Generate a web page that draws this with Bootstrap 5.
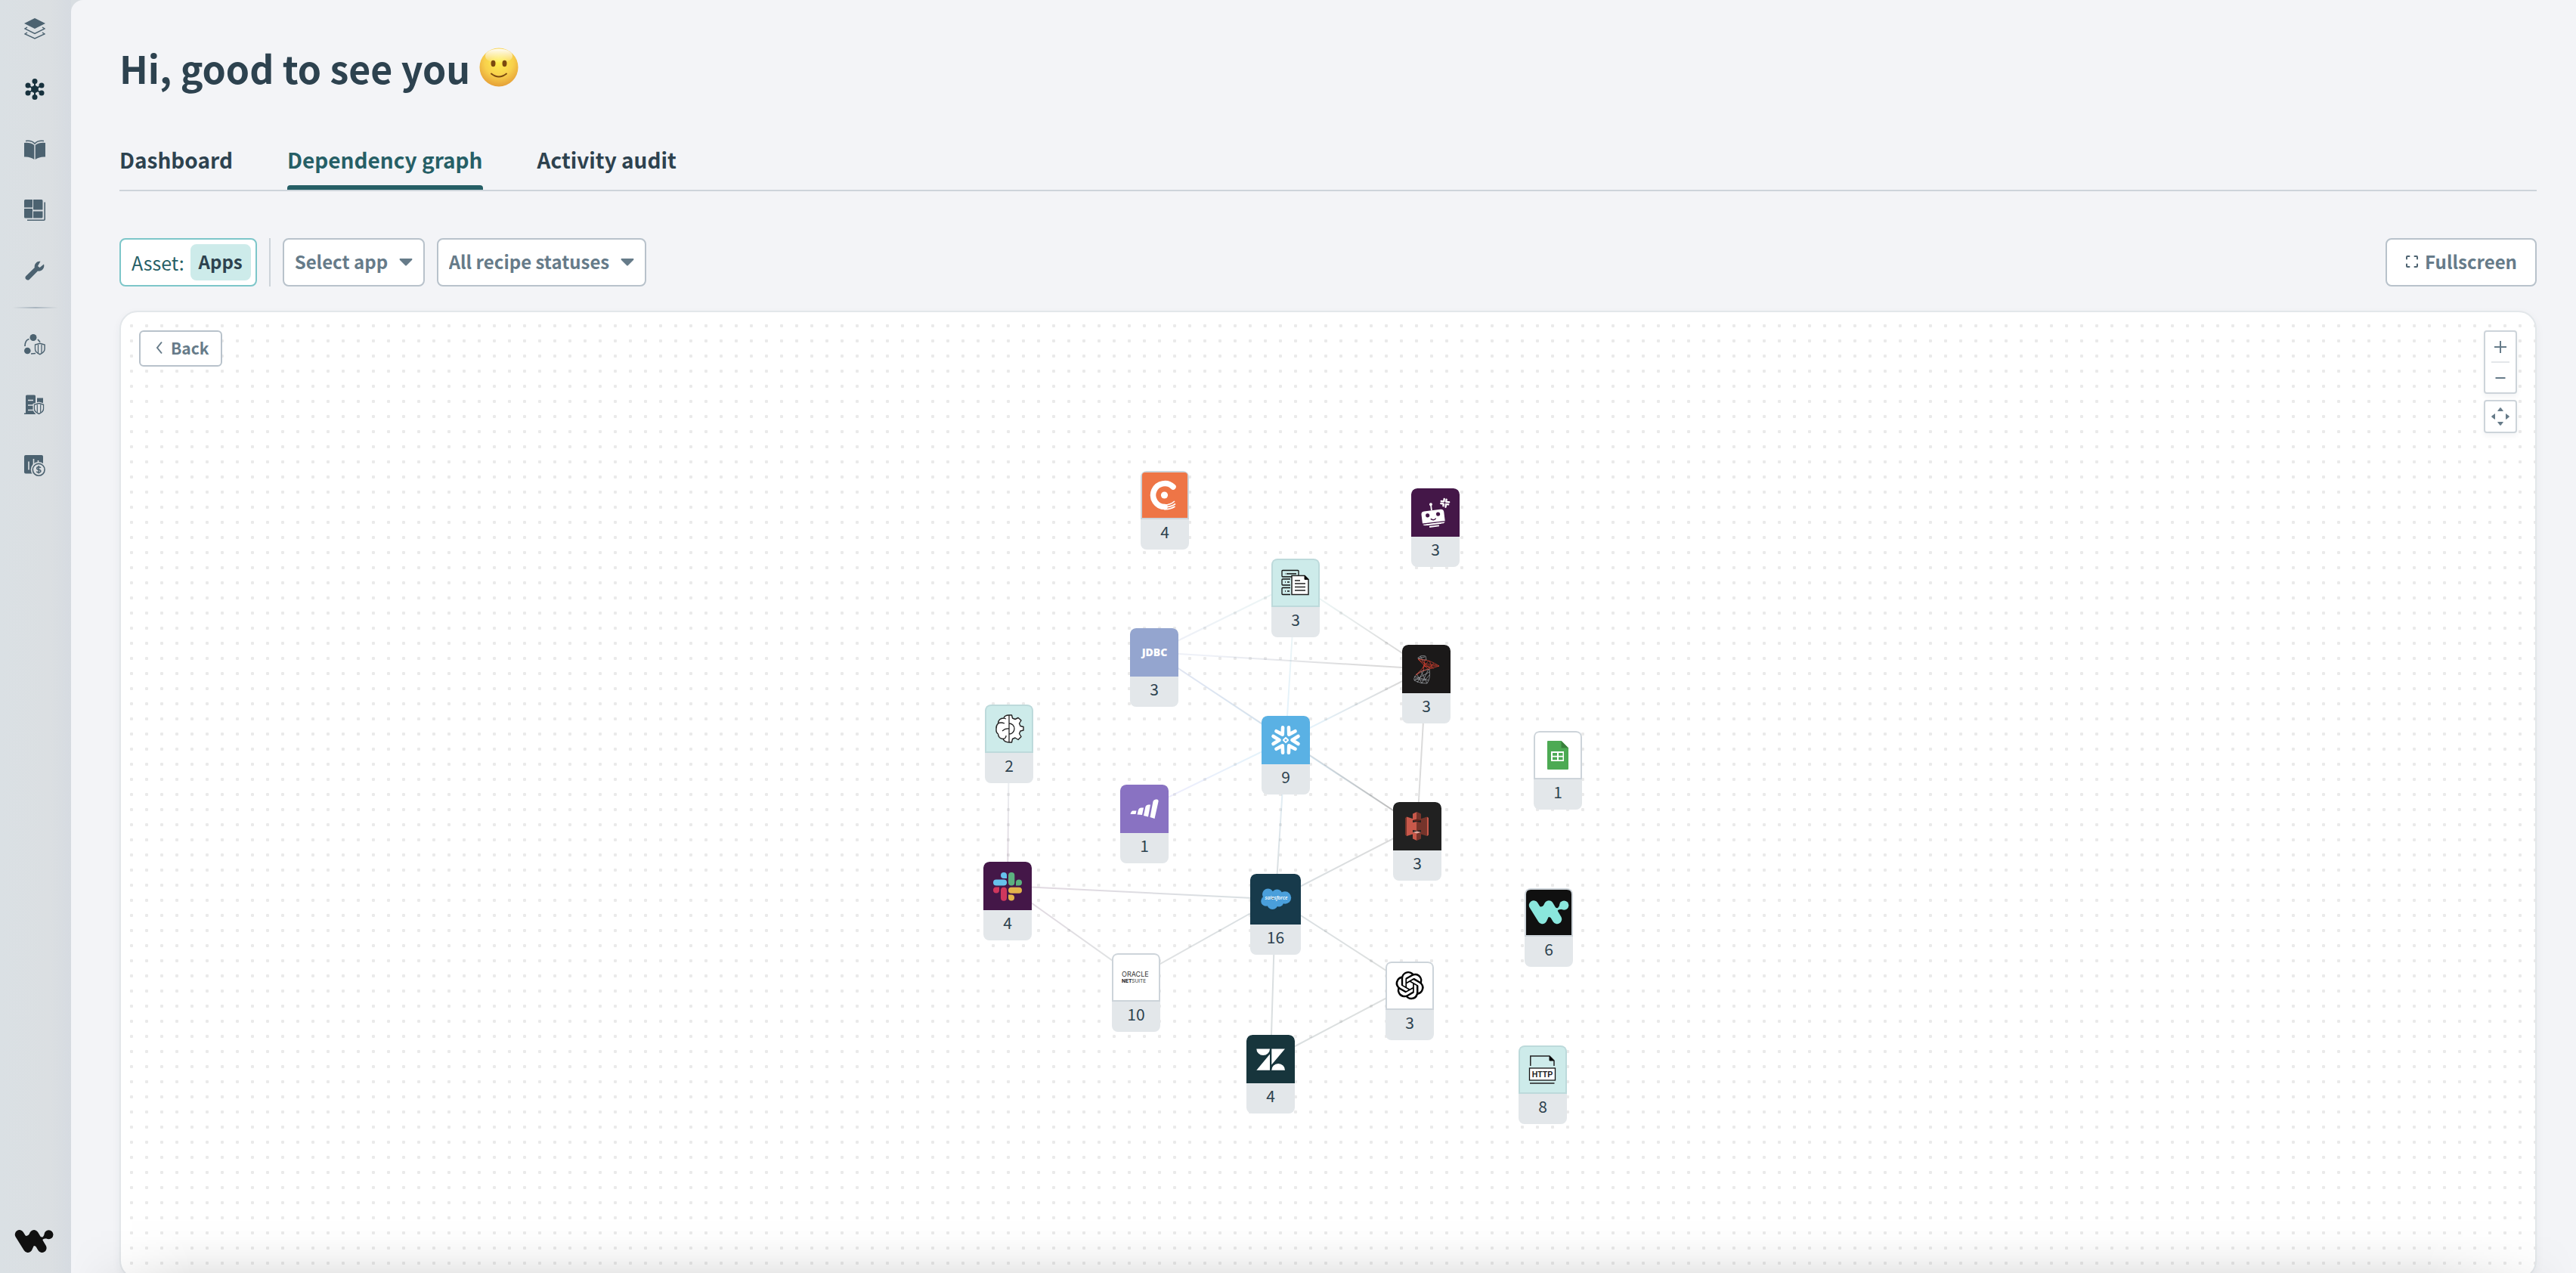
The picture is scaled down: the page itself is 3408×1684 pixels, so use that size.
<!DOCTYPE html>
<html lang="en">
<head>
<meta charset="utf-8">
<meta name="viewport" content="width=device-width, initial-scale=1">
<title>Dependency graph</title>
<link href="https://cdn.jsdelivr.net/npm/bootstrap@5.3.0/dist/css/bootstrap.min.css" rel="stylesheet">
<style>
  :root { --ink:#2d424f; --muted-ink:#667b89; --line:#b8c2cb; --teal:#265f66; --icon:#4c6270; }
  body { font-family:"Noto Sans CJK SC","Source Sans Pro",sans-serif; color:var(--ink); background:#d9dee2; }
  .side { width:94px; padding:14px 0 18px; background:linear-gradient(90deg,#dae0e4,#dbdfe2 70%,#d6dbe1); }
  .side a { height:48px; width:94px; padding-right:2px; color:var(--icon); }
  .side a.active { color:#17313d; }
  .side svg { width:28px; height:28px; }
  .side a.brand { padding-right:4px; color:#101010; }
  .side a.brand svg { width:52px; height:32px; }
  .side .top-links, .side .admin-links { gap:32px; }
  .side-rule { width:60px; height:2px; margin:24px 0; background:linear-gradient(90deg,transparent,#a9b5bf,transparent); }
  .page { background:#f3f4f7; border-top-left-radius:16px; padding:58px 52px 0 64px; min-width:0; }
  .greet { font-size:50px; line-height:62px; font-weight:700; gap:12px; margin:0; }
  .greet svg { width:52px; height:52px; }
  .tabs { gap:72px; margin-top:62px; border-bottom:2px solid #cdd4da; }
  .tabs .nav-link { height:69px; padding:8px 0 0; font-size:28px; line-height:42px; font-weight:700; color:var(--ink); border-radius:0; position:relative; }
  .tabs .nav-link.active { color:var(--teal); }
  .tabs .nav-link.active::after { content:""; position:absolute; left:0; right:0; bottom:0; height:6px; background:var(--teal); border-radius:4px 4px 0 0; }
  .tools { margin-top:62px; gap:16px; }
  .tool { height:64px; border:2px solid var(--line); border-radius:8px; background-color:#fff; color:var(--muted-ink); font-size:24px; line-height:36px; font-weight:700; padding-bottom:2px; }
  .tool:hover { border-color:var(--line); color:var(--ink); background-color:#fff; }
  .asset { border-color:#7dc6c9; color:var(--teal); font-weight:400; padding:0 6px 0 14px; gap:8px; font-size:25px; }
  .asset:hover { border-color:#7dc6c9; }
  .asset span { background:#cdebea; color:var(--ink); font-size:24px; font-weight:700; border-radius:8px; height:48px; padding:5px 11px; }
  .split { width:2px; background:#cdd4da; }
  select.tool { width:auto; padding:0 46px 2px 14px; background-position:right 14px center; background-size:18px 10px;
    background-image:url("data:image/svg+xml,%3Csvg xmlns='http://www.w3.org/2000/svg' viewBox='0 0 18 10'%3E%3Cpath d='M1 0h16q1 1 0 2l-7 7q-1 1-2 0L1 2Q0 1 1 0z' fill='%23667b89'/%3E%3C/svg%3E"); }
  .full { padding:0 24px 2px; gap:8px; }
  .board { margin-top:32px; height:calc(100vh - 403px); min-height:1200px; border:2px solid #e3e7ea; border-radius:24px; padding:24px;
    box-shadow:0 4px 12px rgba(45,66,79,.05); background:#fff radial-gradient(circle at center,#eaeaea 0 2px,transparent 2.4px) 4px 8px/20px 20px; position:relative; }
  .back { height:48px; border:2px solid var(--line); border-radius:6px; background:#fff; color:var(--muted-ink); font-size:21px; line-height:32px; font-weight:700; padding:0 16px 2px 20px; gap:10px; }
  .zoomers { gap:8px; }
  .zoomers > div { width:44px; border:2px solid #cdd4da; border-radius:4px; background:#fff; box-shadow:0 4px 6px rgba(45,66,79,.05); }
  .zoomers button { height:39px; border:0; padding:0; color:var(--muted-ink); border-radius:0; }
  .zoomers .fit { height:40px; }
  .zoomers hr { width:24px; height:2px; margin:0 8px; border:0; background:#e3e7ea; opacity:1; }
  .graph { position:absolute; top:0; left:50%; width:1200px; height:1200px; margin-left:-600px; }
  .edges { position:absolute; inset:0; width:100%; height:100%; }
  .app { position:absolute; width:64px; height:104px; border-radius:8px; background:#e3e7ea; overflow:hidden; color:var(--ink); font-size:21px; line-height:32px; text-align:center; text-decoration:none; display:block; }
  .app > svg { display:block; width:64px; height:64px; border-radius:8px 8px 0 0; }
  .app .edged { box-shadow:inset 0 0 0 2px #cdd4da; }
  .app.hub { width:67px; height:107px; }
  .app.hub > svg { width:67px; height:67px; }
  .fog { position:fixed; left:94px; right:0; bottom:0; height:76px; pointer-events:none; background:linear-gradient(transparent,rgba(0,0,0,.008) 35%,rgba(0,0,0,.04) 70%,rgba(0,0,0,.085)); -webkit-mask-image:linear-gradient(90deg,transparent,#000 160px calc(100% - 200px),transparent); mask-image:linear-gradient(90deg,transparent,#000 160px calc(100% - 200px),transparent); }
</style>
<script src="https://cdn.jsdelivr.net/npm/bootstrap@5.3.0/dist/js/bootstrap.bundle.min.js"></script>
</head>
<body class="vh-100 overflow-hidden">
<svg width="0" height="0" class="position-absolute" aria-hidden="true">
  <symbol id="wmark" viewBox="5 15.500 54 32.500">
    <path d="M12 22.500 23.500 41 32 22.500 43 41" fill="none" stroke="currentColor" stroke-width="12.400" stroke-linecap="round" stroke-linejoin="round"/>
    <path d="M17 22Q21 27 26 22V32H18zM27 41Q32 35 37 41V30H27zM36 20Q40 27 44 26L49 19 53 28Q45 27 43.500 30L46 36 36 36z" fill="currentColor"/>
    <circle cx="52.200" cy="22.600" r="6.200" fill="currentColor"/>
  </symbol>
  <symbol id="shield" viewBox="0 0 16 18"><path d="M8 1 15 3V9Q15 14 8 17 1 14 1 9V3z" fill="#dbdfe2" stroke="currentColor" stroke-width="1.600"/><path d="M5.500 3V15M10.500 3V15" stroke="currentColor" stroke-width="1.400"/></symbol>
</svg>

<div class="d-flex h-100">
  <nav class="side d-flex flex-column align-items-center flex-shrink-0" aria-label="Main">
    <div class="top-links d-flex flex-column">
      <a href="#" class="d-flex align-items-center justify-content-center" aria-label="Projects"><svg viewBox="0 0 28 28"><path d="M14 0 28 7 14 14 0 7z" fill="currentColor"/><path d="M4 12 1 14 14 20.500 27 14 24 12M4 19 1 21 14 27 27 21 24 19" fill="none" stroke="currentColor" stroke-width="1.500"/></svg></a>
      <a href="#" class="active d-flex align-items-center justify-content-center" aria-label="Overview"><svg viewBox="0 0 28 28"><path d="M14 3V25M5 9 23 19M23 9 5 19" stroke="currentColor" stroke-width="2"/><g fill="currentColor"><path d="M14 8.500 18.800 11.200V16.800L14 19.500 9.200 16.800V11.200z"/><circle cx="14" cy="3.500" r="3.500"/><circle cx="14" cy="24.500" r="3.500"/><circle cx="5" cy="9" r="3.500"/><circle cx="23" cy="9" r="3.500"/><circle cx="5" cy="19" r="3.500"/><circle cx="23" cy="19" r="3.500"/></g></svg></a>
      <a href="#" class="d-flex align-items-center justify-content-center" aria-label="Library"><svg viewBox="0 0 28 28"><path d="M0 5Q8 4 13.300 8V27Q8 23 0 23.500zM28 5Q20 4 14.700 8V27Q20 23 28 23.500z" fill="currentColor"/><path d="M2 2.500Q10 1.500 14 6 18 1.500 26 2.500" fill="none" stroke="currentColor" stroke-width="1.500"/></svg></a>
      <a href="#" class="d-flex align-items-center justify-content-center" aria-label="Platform"><svg viewBox="0 0 28 28"><path d="M1.500 0H11V10.500H0V1.500Q0 0 1.500 0zM12 0H23Q24.500 0 24.500 1.500V13.500H12zM0 12H11V24.500H1.500Q0 24.500 0 23zM12 15.500H24.500V23Q24.500 24.500 23 24.500H12z" fill="currentColor"/><path d="M4 27.200H26Q27.200 27.200 27.200 26V3.500" fill="none" stroke="currentColor" stroke-width="1.600"/></svg></a>
      <a href="#" class="d-flex align-items-center justify-content-center" aria-label="Tools"><svg viewBox="0 0 28 28"><path d="M26 5.500 20.500 10 18 8 21.500 1.700A7 7 0 0 0 13.800 10L2 21.500A3.300 3.300 0 0 0 6.600 26L18 14.500A7 7 0 0 0 26 5.500z" fill="currentColor"/></svg></a>
    </div>
    <div class="side-rule"></div>
    <div class="admin-links d-flex flex-column">
      <a href="#" class="d-flex align-items-center justify-content-center" aria-label="Workspace access"><svg viewBox="0 0 28 28"><g fill="currentColor"><circle cx="12" cy="4.500" r="4.500"/><circle cx="4.300" cy="22" r="4.300"/></g><path d="M1 16Q1 8 6.500 6.500M18 7 21 10.500M9 26 15 25.500" fill="none" stroke="currentColor" stroke-width="1.700"/><use href="#shield" x="13.500" y="11" width="14.500" height="17"/></svg></a>
      <a href="#" class="d-flex align-items-center justify-content-center" aria-label="Company settings"><svg viewBox="0 0 28 28"><path d="M0 26V24.500H2V2Q2 .500 3.500 .500H13.500Q15 .500 15 2V26zM17 4.500H25V14H17z" fill="currentColor"/><path d="M5 7.500H12M5 14H12M5 20.500H12" stroke="#dbdfe2" stroke-width="1.300"/><path d="M19.500 9.500 27.500 12V19Q27 25 19.500 28 12 25 11.500 19V12z" fill="#dbdfe2"/><use href="#shield" x="12.500" y="10.500" width="14" height="16"/></svg></a>
      <a href="#" class="d-flex align-items-center justify-content-center" aria-label="Usage"><svg viewBox="0 0 28 28"><path d="M2 0H23Q25 0 25 2V24.500H2Q0 24.500 0 22.500V2Q0 0 2 0z" fill="currentColor"/><path d="M6 8.500V19.500M12.500 5V16M18.500 7V12" stroke="#dbdfe2" stroke-width="1.600"/><circle cx="19" cy="19.300" r="10.200" fill="#dbdfe2"/><circle cx="19.200" cy="19.300" r="7.900" fill="none" stroke="currentColor" stroke-width="1.600"/><path d="M22 16.800Q21 15.700 19.200 15.700 16.700 15.700 16.700 17.400 16.700 18.900 19.200 19.300 21.900 19.700 21.900 21.300 21.900 23 19.200 23 17.200 23 16.300 21.800M19.200 14V24.600" fill="none" stroke="currentColor" stroke-width="1.500"/></svg></a>
    </div>
    <a href="#" class="brand mt-auto d-flex align-items-center justify-content-center" aria-label="Home"><svg><use href="#wmark"/></svg></a>
  </nav>

  <main class="page flex-grow-1">
    <h1 class="greet d-flex align-items-center">Hi, good to see you
      <svg viewBox="0 0 52 52" role="img" aria-label="Smiling face"><defs><radialGradient id="face" cx=".5" cy=".35" r=".68"><stop offset="0" stop-color="#fff04f"/><stop offset=".55" stop-color="#f8d04c"/><stop offset="1" stop-color="#e39a35"/></radialGradient><linearGradient id="shine" x2="0" y2="1"><stop offset="0" stop-color="#fff" stop-opacity=".95"/><stop offset="1" stop-color="#fff" stop-opacity="0"/></linearGradient></defs><circle cx="26" cy="26" r="25.500" fill="url(#face)"/><ellipse cx="26" cy="11" rx="18" ry="9.500" fill="url(#shine)"/><ellipse cx="18.500" cy="21" rx="3" ry="4.200" fill="#7b4a10"/><ellipse cx="33.500" cy="21" rx="3" ry="4.200" fill="#7b4a10"/><path d="M16 34.500Q26 42.500 36 34.500" fill="none" stroke="#7b4a10" stroke-width="2" stroke-linecap="round"/></svg>
    </h1>
    <ul class="nav tabs">
      <li class="nav-item"><a class="nav-link" href="#">Dashboard</a></li>
      <li class="nav-item"><a class="nav-link active" aria-current="page" href="#">Dependency graph</a></li>
      <li class="nav-item"><a class="nav-link" href="#">Activity audit</a></li>
    </ul>
    <div class="tools d-flex">
      <button type="button" class="btn tool asset d-flex align-items-center">Asset: <span>Apps</span></button>
      <div class="split"></div>
      <select class="form-select tool" aria-label="App"><option>Select app</option></select>
      <select class="form-select tool" aria-label="Recipe status"><option>All recipe statuses</option><option>Active</option><option>Inactive</option></select>
      <button type="button" class="btn tool full ms-auto d-flex align-items-center"><svg width="18" height="18" viewBox="0 0 18 18" fill="none" stroke="#4c6270" stroke-width="2" stroke-linecap="round"><path d="M2 5.500V3Q2 2 3 2H5.500M12.500 2H15Q16 2 16 3V5.500M16 12.500V15Q16 16 15 16H12.500M5.500 16H3Q2 16 2 15V12.500"/></svg>Fullscreen</button>
    </div>

    <section class="board d-flex align-items-start justify-content-between" aria-label="Dependency graph">
      <div class="graph" id="graph">
        <svg class="edges" viewBox="0 0 1200 1200" aria-hidden="true"></svg>

        <a href="#" class="app" data-id="chargebee" style="left:352px;top:210px"><svg class="edged" viewBox="0 0 64 64"><path d="M2 6Q2 2 6 2H58Q62 2 62 6V62H2z" fill="#ee7546"/><path d="M43 21A15.500 15.500 0 1 0 32 47.500" fill="none" stroke="#fff" stroke-width="7.500" stroke-linecap="round"/><circle cx="31.500" cy="32" r="4.600" fill="#fff"/><path d="M30 45Q39 45.500 45 40M30 48Q40 48 46 43.500M31 50.500Q38 51.500 45.500 47" fill="none" stroke="#fff" stroke-width="1.600"/></svg>4</a>
        <a href="#" class="app" data-id="bot" style="left:710px;top:233px"><svg viewBox="0 0 64 64"><path d="M0 0H64V64H0z" fill="#441748"/><g transform="rotate(-7 29 38)"><rect x="14" y="29" width="30" height="19" rx="4" fill="#fff"/><path d="M28 29V22" stroke="#fff" stroke-width="1.800"/><circle cx="28" cy="21" r="2" fill="#fff"/><circle cx="22" cy="35" r="2.600" fill="#441748"/><circle cx="36" cy="35" r="2.600" fill="#441748"/><path d="M25.500 40Q29 43.500 32.500 40M14 45.500H44M18 48.500H40" fill="none" stroke="#441748" stroke-width="1.400"/><path d="M19 47.200H39M22.500 50.300H35.500" stroke="#fff" stroke-width="1.900"/></g><g stroke="#fff" stroke-width="2.400" stroke-linecap="round" transform="rotate(8 44.500 19)"><path d="M43 14V17.500M39.500 17.700H42M46 14.500V17.500M47 17.500H50M46 20.700H49.500M46.300 21V24.500M43 21V23.500M39.500 20.700H42.500"/></g></svg>3</a>
        <a href="#" class="app" data-id="tables" style="left:525px;top:326px"><svg viewBox="0 0 64 64"><path d="M0 0H64V64H0z" fill="#cdebea"/><path d="M1 64V8Q1 1 8 1H56Q63 1 63 8V63H0" fill="none" stroke="#bddadb" stroke-width="2"/><g fill="none" stroke="#111" stroke-width="1.300"><rect x="14" y="15.500" width="22" height="8.500" rx="1"/><path d="M25 27H15Q14 27 14 28V34Q14 35 15 35H25M25 38.500H15Q14 38.500 14 39.500V46.500Q14 47.500 15 47.500H25M20 20H33M18 20H18.500M18 31H19M21 31H24M18 43H19M21 43H24"/></g><path d="M27 22.500H44L49 27.500V47.500H27z" fill="#fff" stroke="#222" stroke-width="1.500"/><path d="M44 22.500V27.500H49z" stroke="#111"/><path d="M31 29H38M31 33H45M31 37.500H45M31 42H45" stroke="#222" stroke-width="1.500"/></svg>3</a>
        <a href="#" class="app" data-id="jdbc" style="left:338px;top:418px"><svg viewBox="0 0 64 64"><path d="M0 0H64V64H0z" fill="#94a5cf"/><text x="32.500" y="37" text-anchor="middle" font-family="Open Sans, sans-serif" font-weight="800" font-size="14" fill="#fff">JDBC</text></svg>3</a>
        <a href="#" class="app" data-id="sql" style="left:698px;top:440px"><svg viewBox="0 0 64 64"><path d="M0 0H64V64H0z" fill="#1b1919"/><g fill="none" stroke-width=".700"><path d="M20.500 18Q24 13 31 15L32 20 27 20 21 18 30 16M24 15 27 20M36 32Q38 44 33 51 25 52 16 47 14 42 25 35L36 32M25 35 33 51M16 47 36 36M20 50 29 33M16 42 35 47M26 51 35 32M19 38 26 51M17 45 30 47 36 40" stroke="#a3a8ae"/><path d="M21 19 30 20Q38 21 49 28 40 31 28 34L18 40 27 31 30 25 21 19 34 32M25 19 36 31 42 24M30 20 28 34M35 21 27 31M30 25 46 27M49 28 29 28 42 31M36 21 40 31" stroke="#d8402f"/></g></svg>3</a>
        <a href="#" class="app" data-id="ml" style="left:146px;top:519px"><svg viewBox="0 0 64 64"><path d="M0 0H64V64H0z" fill="#cdebea"/><path d="M1 64V8Q1 1 8 1H56Q63 1 63 8V63H0" fill="none" stroke="#bddadb" stroke-width="2"/><path d="M32 14Q26 14 25 18 18 18 17.500 25 14.500 28 15 32 14.500 37 17.500 39 18 45 24 45.500 26 50 32 50H35.500L36.500 45.500 40 44 44 46.500 48 42.500 45.500 38.500 47 35 51 34V29.500L47 28.500 45.500 25 48 21 44 17.500 40 19.500 36.500 18 35.500 14z" fill="#fff" stroke="#222" stroke-width="1.400" stroke-linejoin="round"/><path d="M32 14V50M32 25A7 7 0 0 1 32 39M32 32Q27 31 23 35M17.500 25Q21 23 26 25M28 41Q28 45 24 45.500M25 18 28 19" fill="none" stroke="#222" stroke-width="1.300"/></svg>2</a>
        <a href="#" class="app" data-id="snowflake" style="left:512px;top:534px"><svg viewBox="0 0 64 64"><path d="M0 0H64V64H0z" fill="#5ab1e4"/><g fill="none" stroke="#fff" stroke-width="4.600" stroke-linecap="round" stroke-linejoin="round"><path id="arm" d="M15.500 27 23.500 32 15.500 37"/><use href="#arm" transform="rotate(60 32 32)"/><use href="#arm" transform="rotate(120 32 32)"/><use href="#arm" transform="rotate(180 32 32)"/><use href="#arm" transform="rotate(240 32 32)"/><use href="#arm" transform="rotate(300 32 32)"/><path d="M32 28.800 35.200 32 32 35.200 28.800 32z" stroke-width="1.800"/></g></svg>9</a>
        <a href="#" class="app" data-id="marketo" style="left:325px;top:625px"><svg viewBox="0 0 64 64"><path d="M0 0H64V64H0z" fill="#8972c2"/><path d="M13.500 39Q14.500 34.500 17 34.500H21.500L20.500 39zM22.500 39.500 24 33.500Q25 30.500 28 30.500H31L29 40zM31 41 33.500 29Q34.500 26.500 37 26.500H40L37 42.500zM39.500 43 43.500 22Q44.500 19.500 47 19.500H49Q51 20 50.500 22.500L45.500 45z" fill="#fff"/></svg>1</a>
        <a href="#" class="app" data-id="s3" style="left:686px;top:648px"><svg viewBox="0 0 64 64"><path d="M0 0H64V64H0z" fill="#212121"/><path d="M16 21 18 19.500V45L16 43.500zM37 22 45 19.500V45L37 42.500z" fill="#75342b"/><path d="M18 19.500 26 22V42.500L18 45zM45 19.500 47 21V43.500L45 45z" fill="#c8584a"/><path d="M26 15.500 31.500 13V24.500L26 24zM26 27 31.500 26V38L26 37z" fill="#c8584a"/><path d="M26 40 31.500 41V51L26 48.500z" fill="#c8584a"/><path d="M31.500 13 37 15.500V24L31.500 24.500zM31.500 26 37 27V37L31.500 38z" fill="#75342b"/><path d="M31.500 41 37 40V48.500L31.500 51z" fill="#75342b"/><path d="M26 40 31.500 38.500 37 40 31.500 41.500z" fill="#e5a89e"/><path d="M26 24 31.500 22.500 37 24 31.500 25.500z" fill="#5e241d"/></svg>3</a>
        <a href="#" class="app" data-id="slack" style="left:144px;top:727px"><svg viewBox="0 0 64 64"><path d="M0 0H64V64H0z" fill="#441748"/><path d="M27 14A4 4 0 0 1 31 18V22H27A4 4 0 0 1 27 14z" fill="#66c2ec"/><rect x="13" y="23.500" width="18" height="8" rx="4" fill="#66c2ec"/><rect x="33" y="14" width="8.300" height="17.500" rx="4" fill="#5cb17f"/><path d="M43 31.500V27.500A4 4 0 0 1 51 27.500 4 4 0 0 1 47 31.500z" fill="#5cb17f"/><path d="M21 33.500V37.500A4 4 0 0 1 13 37.500 4 4 0 0 1 17 33.500z" fill="#cf375d"/><rect x="23" y="33.700" width="8" height="18" rx="4" fill="#cf375d"/><rect x="33" y="33.700" width="18" height="8" rx="4" fill="#e3b44c"/><path d="M33 43.500H37A4 4 0 0 1 37 51.500 4 4 0 0 1 33 47.500z" fill="#e3b44c"/></svg>4</a>
        <a href="#" class="app hub" data-id="salesforce" style="left:497px;top:743px"><svg viewBox="0 0 67 67"><path d="M0 0H67V67H0z" fill="#173a4b"/><g fill="#4a9fdb"><circle cx="23.500" cy="27" r="7.500"/><circle cx="35.500" cy="27.500" r="7"/><circle cx="46" cy="31.500" r="8.200"/><circle cx="21" cy="36" r="6.800"/><circle cx="29.500" cy="40" r="7"/><circle cx="38" cy="37" r="6.500"/></g><text x="34.500" y="34" text-anchor="middle" font-family="Open Sans, sans-serif" font-style="italic" font-weight="600" font-size="6.500" fill="#fff">salesforce</text></svg>16</a>
        <a href="#" class="app" data-id="netsuite" style="left:314px;top:848px"><svg viewBox="0 0 64 64"><path d="M1 64V8Q1 1 8 1H56Q63 1 63 8V63H0" fill="#fff" stroke="#cdd4da" stroke-width="2"/><g font-family="Inter, sans-serif" fill="#333"><text x="13" y="31" font-size="9">ORACLE</text><text x="13" y="38.500" font-size="6.500"><tspan font-weight="800">NET</tspan>SUITE</text></g></svg>10</a>
        <a href="#" class="app" data-id="openai" style="left:676px;top:859px"><svg viewBox="0 0 64 64"><path d="M1 64V8Q1 1 8 1H56Q63 1 63 8V63H0" fill="#fff" stroke="#cdd4da" stroke-width="2"/><path transform="translate(13.500 13) scale(1.550)" d="M22.2819 9.8211a5.9847 5.9847 0 0 0-.5157-4.9108 6.0462 6.0462 0 0 0-6.5098-2.9A6.0651 6.0651 0 0 0 4.9807 4.1818a5.9847 5.9847 0 0 0-3.9977 2.9 6.0462 6.0462 0 0 0 .7427 7.0966 5.98 5.98 0 0 0 .511 4.9107 6.051 6.051 0 0 0 6.5146 2.9001A5.9847 5.9847 0 0 0 13.2599 24a6.0557 6.0557 0 0 0 5.7718-4.2058 5.9894 5.9894 0 0 0 3.9977-2.9001 6.0557 6.0557 0 0 0-.7475-7.0729zm-9.022 12.6081a4.4755 4.4755 0 0 1-2.8764-1.0408l.1419-.0804 4.7783-2.7582a.7948.7948 0 0 0 .3927-.6813v-6.7369l2.02 1.1686a.071.071 0 0 1 .038.052v5.5826a4.504 4.504 0 0 1-4.4945 4.4944zm-9.6607-4.1254a4.4708 4.4708 0 0 1-.5346-3.0137l.142.0852 4.783 2.7582a.7712.7712 0 0 0 .7806 0l5.8428-3.3685v2.3324a.0804.0804 0 0 1-.0332.0615L9.74 19.9502a4.4992 4.4992 0 0 1-6.1408-1.6464zM2.3408 7.8956a4.485 4.485 0 0 1 2.3655-1.9728V11.6a.7664.7664 0 0 0 .3879.6765l5.8144 3.3543-2.0201 1.1685a.0757.0757 0 0 1-.071 0l-4.8303-2.7865A4.504 4.504 0 0 1 2.3408 7.872zm16.5963 3.8558L13.1038 8.364 15.1192 7.2a.0757.0757 0 0 1 .071 0l4.8303 2.7913a4.4944 4.4944 0 0 1-.6765 8.1042v-5.6772a.79.79 0 0 0-.407-.667zm2.0107-3.0231l-.142-.0852-4.7735-2.7818a.7759.7759 0 0 0-.7854 0L9.409 9.2297V6.8974a.0662.0662 0 0 1 .0284-.0615l4.8303-2.7866a4.4992 4.4992 0 0 1 6.6802 4.66zM8.3065 12.863l-2.02-1.1638a.0804.0804 0 0 1-.038-.0567V6.0742a4.4992 4.4992 0 0 1 7.3757-3.4537l-.142.0805L8.704 5.459a.7948.7948 0 0 0-.3927.6813zm1.0976-2.3654l2.602-1.4998 2.6069 1.4998v2.9994l-2.5974 1.4997-2.6067-1.4997Z"/></svg>3</a>
        <a href="#" class="app" data-id="zendesk" style="left:492px;top:956px"><svg viewBox="0 0 64 64"><path d="M0 0H64V64H0z" fill="#17353c"/><path d="M13.300 18.400H31A8.850 8.600 0 0 1 13.300 18.400zM31 25.500V46.700H13.300zM33.300 18.400H51L33.300 39.500zM33.300 46.700A8.850 8.600 0 0 1 51 46.700z" fill="#fff"/></svg>4</a>
        <a href="#" class="app" data-id="sheets" style="left:872px;top:554px"><svg viewBox="0 0 64 64"><path d="M1 64V8Q1 1 8 1H56Q63 1 63 8V63H0" fill="#fff" stroke="#cdd4da" stroke-width="2"/><path d="M19 13H36.500L46 22.500V50Q46 51 45 51H19Q18 51 18 50V14Q18 13 19 13z" fill="#4caa53"/><path d="M36.500 13 46 22.500H36.500z" fill="#38803c"/><path d="M23 27H40V40H23z" fill="#fff"/><path d="M25 29H31V32.700H25zM33 29H38.500V32.700H33zM25 34.600H31V38.300H25zM33 34.600H38.500V38.300H33z" fill="#4caa53"/></svg>1</a>
        <a href="#" class="app" data-id="workato" style="left:860px;top:762px"><svg viewBox="0 0 64 64"><path d="M1 64V8Q1 1 8 1H56Q63 1 63 8V63H0" fill="#101010" stroke="#cdd4da" stroke-width="2"/><use href="#wmark" x="5" y="15.500" width="54" height="32.500" style="color:#8ae7dd"/></svg>6</a>
        <a href="#" class="app" data-id="http" style="left:852px;top:970px"><svg viewBox="0 0 64 64"><path d="M0 0H64V64H0z" fill="#cdebea"/><path d="M1 64V8Q1 1 8 1H56Q63 1 63 8V63H0" fill="none" stroke="#bddadb" stroke-width="2"/><path d="M15.800 27V14H41L47 20V27M15 50H47.500" fill="none" stroke="#222" stroke-width="1.500"/><path d="M41 14V20H47z" stroke="#111"/><rect x="14.500" y="30" width="34" height="16" fill="#fff" stroke="#111" stroke-width="1.300"/><text x="31.500" y="42" text-anchor="middle" font-family="Liberation Sans, sans-serif" font-weight="700" font-size="10.500" fill="#222">HTTP</text></svg>8</a>
      </div>
      <button type="button" class="btn back position-relative d-flex align-items-center"><svg width="10" height="18" viewBox="0 0 10 18" fill="none" stroke="currentColor" stroke-width="2"><path d="M8 1.500 2 9 8 16.500"/></svg>Back</button>
      <div class="zoomers position-relative d-flex flex-column">
        <div class="d-flex flex-column">
          <button type="button" class="btn d-flex align-items-center justify-content-center" aria-label="Zoom in"><svg width="16" height="16" viewBox="0 0 16 16" stroke="currentColor" stroke-width="2"><path d="M8 0V16M0 8H16"/></svg></button>
          <hr>
          <button type="button" class="btn d-flex align-items-center justify-content-center" aria-label="Zoom out"><svg width="16" height="16" viewBox="0 0 16 16" stroke="currentColor" stroke-width="2"><path d="M1.500 8H14.500"/></svg></button>
        </div>
        <div><button type="button" class="btn fit w-100 d-flex align-items-center justify-content-center" aria-label="Fit to screen"><svg width="24" height="24" viewBox="0 0 24 24" fill="currentColor"><path d="M12 0Q13 .500 16 5H8Q11 .500 12 0zM12 24Q13 23.500 16 19H8Q11 23.500 12 24zM0 12Q.500 11 5 8V16Q.500 13 0 12zM24 12Q23.500 11 19 8V16Q23.500 13 24 12z"/></svg></button></div>
      </div>
    </section>
  </main>
</div>
<div class="fog"></div>
<script>
  // Links between apps: each line blends the colours of its two ends.
  const tint = { tables:'#8fc3c3', jdbc:'#94a5cf', sql:'#1b1919', ml:'#9fc4c8', snowflake:'#5ab1e4', marketo:'#8f8ff0', s3:'#212121', slack:'#441748', salesforce:'#173a4b', netsuite:'#3c4a50', openai:'#30403c', zendesk:'#17353c' };
  const links = [['jdbc','tables'],['jdbc','sql'],['jdbc','snowflake'],['jdbc','s3'],['tables','sql'],['tables','snowflake'],['sql','snowflake'],['sql','s3'],['snowflake','s3'],['marketo','snowflake'],['snowflake','salesforce'],['s3','salesforce'],['slack','salesforce'],['netsuite','salesforce'],['salesforce','openai'],['salesforce','zendesk'],['zendesk','openai'],['slack','netsuite'],['ml','slack']];
  const mid = id => { const n = document.querySelector('[data-id=' + id + ']'); const r = n.offsetWidth / 2; return [n.offsetLeft + r, n.offsetTop + r]; };
  document.querySelector('.edges').innerHTML = links.map(([a, b], i) => {
    const [x1, y1] = mid(a), [x2, y2] = mid(b), at = `x1="${x1}" y1="${y1}" x2="${x2}" y2="${y2}"`;
    return `<linearGradient id="e${i}" gradientUnits="userSpaceOnUse" ${at}><stop offset=".2" stop-color="${tint[a]}"/><stop offset=".8" stop-color="${tint[b]}"/></linearGradient><line ${at} stroke="url(#e${i})" stroke-width="2" stroke-opacity=".16"/>`;
  }).join('');
</script>
</body>
</html>
